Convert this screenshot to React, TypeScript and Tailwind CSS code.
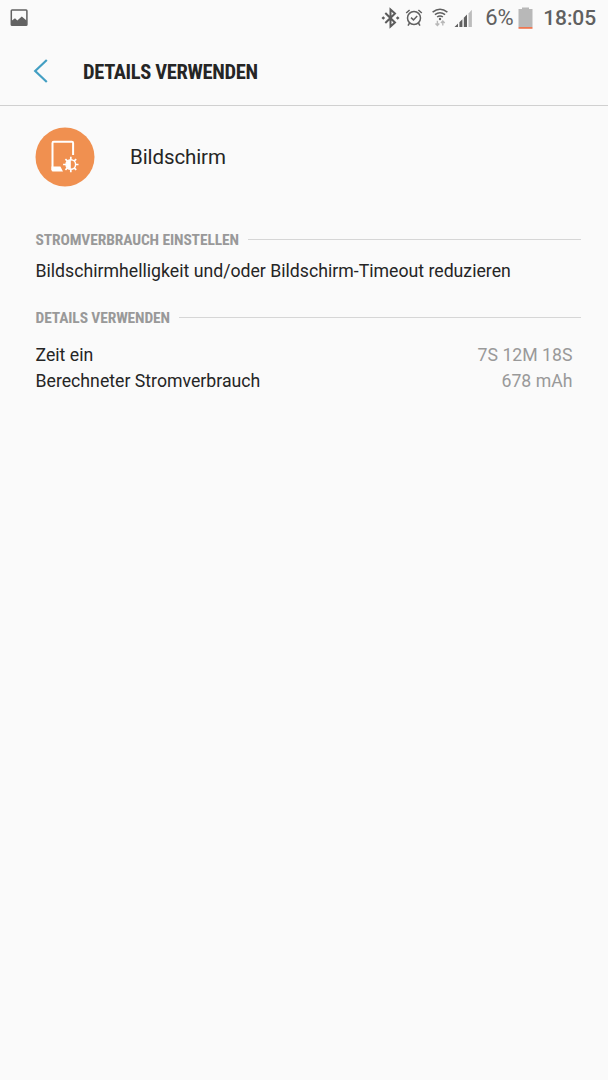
import { ReactNode } from "react";

const usage = [
  { label: "Zeit ein", value: "7S 12M 18S" },
  { label: "Berechneter Stromverbrauch", value: "678 mAh" },
];

function PictureIcon() {
  return (
    <svg width="20" height="18" viewBox="0 0 20 18" className="mr-auto">
      <rect x="2.3" y="0.9" width="15.6" height="15.4" rx="0.8" fill="none" stroke="#626262" strokeWidth="1.5" />
      <path d="M2.3 12 L6 9.2 L8.3 11.4 L12.8 7.6 L17.8 11.8 V16 H2.3 Z" fill="#626262" />
    </svg>
  );
}

function BluetoothIcon() {
  return (
    <svg width="19" height="22" viewBox="0 0 19 22" fill="none" stroke="#5c5c5c" strokeWidth="2">
      <path d="M4.3 6 L14 15.5 L9.5 19.6 V2.4 L14 6.5 L4.3 16" />
      <path d="M0.5 11 L2.3 9.2 L4.1 11 L2.3 12.8 Z M14.9 11 L16.7 9.2 L18.5 11 L16.7 12.8 Z" fill="#5c5c5c" stroke="none" />
    </svg>
  );
}

function AlarmIcon() {
  return (
    <svg width="18" height="20" viewBox="0 0 18 20" fill="none" stroke="#606060" strokeWidth="1.5">
      <circle cx="9" cy="10" r="6.5" />
      <path d="M6 9.6 L8.5 11.9 L12.2 8" />
      <path d="M1.2 5 L4.6 2 M16.8 5 L13.4 2 M4.6 15 L3 17.6 M13.4 15 L15 17.6" />
    </svg>
  );
}

function WifiIcon() {
  return (
    <svg width="18" height="20" viewBox="0 0 18 20" fill="none" stroke="#606060" strokeWidth="1.5">
      <path d="M1.6 4.2 Q9 -1.6 16.4 4.2 M3.9 6.7 Q9 2.8 14.1 6.7 M6.1 9 Q9 6.8 11.9 9" />
      <circle cx="9" cy="11" r="1.2" fill="#606060" stroke="none" />
      <path d="M6.4 12.8 V17.4 M4.5 15.4 L6.4 17.4 L8.3 15.4 M11.8 17.6 V13 M9.9 15 L11.8 13 L13.7 15" stroke="#b8b8b8" strokeWidth="1.4" />
    </svg>
  );
}

function SignalIcon() {
  return (
    <svg width="19" height="19" viewBox="0 0 19 19" fill="#606060">
      <path d="M0.5 18 L4 14.5 V18 Z M5.4 13.2 L8.4 10.2 V18 H5.4 Z M9.8 8.8 L13 5.6 V18 H9.8 Z" />
      <path d="M14.5 4.5 L17.9 0.8 V18 H14.5 Z" fill="#bcbcbc" />
    </svg>
  );
}

function BatteryIcon() {
  return (
    <svg width="15" height="22" viewBox="0 0 15 22">
      <path d="M4 0.5 H11 V2 H14.5 V20 H0.5 V2 H4 Z" fill="#b8b8b8" />
      <path d="M0.5 20 H14.5 V21.8 H0.5 Z" fill="#ee7751" />
    </svg>
  );
}

function ScreenIcon() {
  return (
    <svg width="60" height="60" viewBox="0 0 60 60" className="shrink-0">
      <circle cx="30" cy="30" r="29.5" fill="#f09050" />
      <path
        d="M17.5 43 V16 Q17.5 14.8 18.7 14.8 H36.9 Q38.1 14.8 38.1 16 V28"
        fill="none"
        stroke="#fff"
        strokeWidth="2"
      />
      <path d="M16.5 39.6 H25.4 L28 44.6 H18 Q16.5 44.6 16.5 43 Z" fill="#fff" />
      <circle cx="35.8" cy="37.5" r="4.8" fill="none" stroke="#fff" strokeWidth="1.4" />
      <path d="M35.8 32.8 A4.7 4.7 0 0 0 35.8 42.2 Z" fill="#fff" />
      <path
        d="M35.8 29.8 V32.8 M35.8 42.2 V45.2 M28.1 37.5 H31.1 M40.5 37.5 H43.5 M30.4 32.1 L32.5 34.2 M39.1 40.8 L41.2 42.9 M41.2 32.1 L39.1 34.2 M32.5 40.8 L30.4 42.9"
        stroke="#fff"
        strokeWidth="1.7"
      />
    </svg>
  );
}

function StatusBar() {
  return (
    <div className="flex h-9 items-center pr-3 pl-[9px] text-[#606060]">
      <PictureIcon />
      <BluetoothIcon />
      <div className="ml-[5px]"><AlarmIcon /></div>
      <div className="ml-2"><WifiIcon /></div>
      <div className="ml-[5px]"><SignalIcon /></div>
      <span className="ml-3 text-[22px] leading-9 tracking-[-0.3px]">6%</span>
      <div className="ml-[5px] pb-px"><BatteryIcon /></div>
      <span className="ml-[10px] text-[21px] leading-9 font-medium tracking-[-0.1px]">18:05</span>
    </div>
  );
}

function SectionHeader({ children }: { children: ReactNode }) {
  return (
    <div className="flex h-5 items-center pr-[27px]">
      <h2 className="pl-[0.5px] text-[15.5px] leading-5 font-bold tracking-[-0.12px] whitespace-nowrap text-[#999] [font-stretch:75%]">
        {children}
      </h2>
      <div className="mb-px ml-[9px] h-[1.5px] flex-1 bg-[#d6d6d6]" />
    </div>
  );
}

export default function App() {
  return (
    <div className="min-h-screen bg-[#fafafa] font-['Roboto',sans-serif] text-[#252525]">
      <StatusBar />
      <header className="flex h-[70px] items-center border-b border-[#d0d0d0] pl-[33px]">
        <svg width="16" height="26" viewBox="0 0 16 26" fill="none" stroke="#439fc3" strokeWidth="2.2">
          <path d="M13.8 2 L2.2 13 L13.8 24" />
        </svg>
        <h1 className="ml-[34px] pt-0.5 text-[20.5px] leading-7 font-bold tracking-[-0.35px] [font-stretch:75%]">
          DETAILS VERWENDEN
        </h1>
      </header>
      <main className="pl-[35px]">
        <div className="flex h-[101px] items-center">
          <ScreenIcon />
          <span className="ml-[35px] text-[20.5px] leading-7 tracking-[-0.1px]">Bildschirm</span>
        </div>
        <div className="mt-[23px]">
          <SectionHeader>STROMVERBRAUCH EINSTELLEN</SectionHeader>
          <p className="mt-2 pl-[0.5px] text-[17.7px] leading-[26px]">
            Bildschirmhelligkeit und/oder Bildschirm-Timeout reduzieren
          </p>
        </div>
        <div className="mt-6">
          <SectionHeader>DETAILS VERWENDEN</SectionHeader>
          <dl className="mt-[14px] pr-[35.5px] pl-[0.5px] text-[17.7px] leading-[26px]">
            {usage.map((row) => (
              <div key={row.label} className="flex justify-between">
                <dt>{row.label}</dt>
                <dd className="text-[#999]">{row.value}</dd>
              </div>
            ))}
          </dl>
        </div>
      </main>
    </div>
  );
}
